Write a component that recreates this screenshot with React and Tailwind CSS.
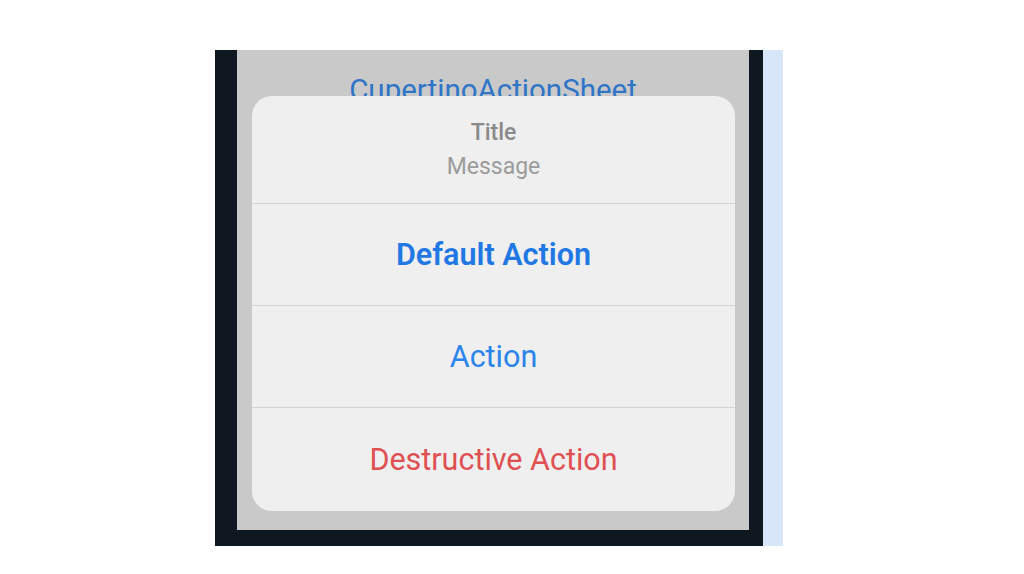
export default function App() {
    return (
        <main className="min-h-screen w-full bg-white font-['Roboto',sans-serif]">
            <div className="flex pl-[215px] pt-[50px]">
                <div className="flex h-[496px] w-[548px] bg-[#0f1720] pb-[16px] pl-[22px] pr-[14px]">
                    <div className="flex h-full w-full flex-col items-center bg-[#c9c9c9]">
                        <div className="pt-[23px] text-[29.5px] leading-[34px] text-[#2e74c7]">CupertinoActionSheet</div>
                        <div className="-mt-[11px] flex w-[483px] flex-col overflow-hidden rounded-[20px] bg-[#efefef] ml-[1px]">
                            <div className="flex h-[107px] flex-col items-center justify-center">
                                <div className="text-[23px] font-medium leading-[34px] text-[#8a8a8a]">Title</div>
                                <div className="text-[23px] leading-[34px] text-[#9b9b9b]">Message</div>
                            </div>
                            <div className="flex h-[102px] items-center justify-center border-t border-[#d3d3d3] text-[30.5px] font-semibold text-[#1f78e3]">
                                Default Action
                            </div>
                            <div className="flex h-[102px] items-center justify-center border-t border-[#d3d3d3] text-[30.5px] text-[#2a84ea]">
                                Action
                            </div>
                            <div className="flex h-[104px] items-center justify-center border-t border-[#d3d3d3] text-[30.5px] text-[#e04f52]">
                                Destructive Action
                            </div>
                        </div>
                    </div>
                </div>
                <div className="h-[496px] w-[20px] bg-[#d7e6f8]" />
            </div>
        </main>
    );
}
